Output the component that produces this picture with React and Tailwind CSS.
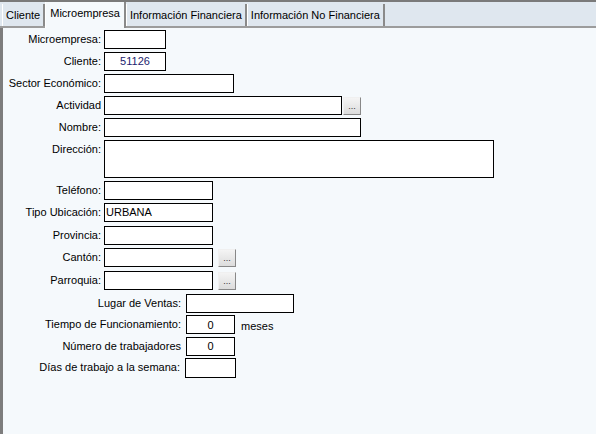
import React from 'react';

const font = { fontFamily: '"Liberation Sans", Arial, sans-serif' };

function Field({ w, h = 'h-[19px]', value = '', align = 'text-left', color = 'text-black' }) {
    return (
        <div className={`${w} ${h} border border-black bg-white flex items-center px-[1px] text-[11px] ${align} ${color}`}>
            <span className="w-full">{value}</span>
        </div>
    );
}

function Dots({ ml = '' }) {
    return (
        <div className={`${ml} w-[18px] h-[18px] bg-gradient-to-b from-[#f4f4f4] to-[#dcdcdc] border border-t-[#f0f0f0] border-l-[#f0f0f0] border-r-[#888] border-b-[#888] flex items-end justify-center pb-[3px] text-[9px] leading-none text-[#333]`}>
            ...
        </div>
    );
}

function Row({ label, labelW = 'w-[98px]', gap = 'gap-[3px]', mt, items = 'items-center', labelPad = '', children }) {
    return (
        <div className={`flex ${items} ${gap} ${mt}`}>
            <div className={`${labelW} ${labelPad} text-right text-[11px] text-black shrink-0 leading-none`}>{label}</div>
            {children}
        </div>
    );
}

export default function App() {
    const tabs = ['Cliente', 'Microempresa', 'Información Financiera', 'Información No Financiera'];

    return (
        <div style={font} className="w-[596px] h-[434px] bg-[#f5f9fc] flex flex-col overflow-hidden">
            <div className="h-[2px] bg-[#7a7a7a] shrink-0" />
            <div className="h-[26px] bg-[#dfe7ef] flex items-end shrink-0 relative">
                <div className="absolute left-0 right-0 bottom-0 h-[2px] bg-[#9c9c9c]" />
                <div className="flex items-end pl-[2px] relative">
                    {tabs.map((t, i) =>
                        i === 1 ? (
                            <div key={t} className="h-[26px] px-[4px] bg-[#f5f9fc] border-l border-l-white border-r-2 border-r-[#8a8a8a] text-[11px] flex items-center pb-[4px]">
                                {t}
                            </div>
                        ) : (
                            <div key={t} className="h-[22px] px-[3px] border-r-2 border-r-[#8a8a8a] border-l border-l-white text-[11px] flex items-center mb-[2px]">
                                {t}
                            </div>
                        )
                    )}
                </div>
            </div>
            <div className="flex-1 border-l-[3px] border-l-[#7d7d7d] flex flex-col pt-[2px]">
                <Row label="Microempresa:"><Field w="w-[62px]" /></Row>
                <Row label="Cliente:" mt="mt-[3px]">
                    <Field w="w-[62px]" value="51126" align="text-center" color="text-[#1c1c6e]" />
                </Row>
                <Row label="Sector Económico:" mt="mt-[3px]"><Field w="w-[130px]" /></Row>
                <Row label="Actividad" mt="mt-[3px]" gap="gap-0">
                    <div className="w-[3px]" />
                    <Field w="w-[238px]" />
                    <Dots ml="ml-[1px]" />
                </Row>
                <Row label="Nombre:" mt="mt-[3px]"><Field w="w-[257px]" /></Row>
                <Row label="Dirección:" mt="mt-[3px]" items="items-start" labelPad="pt-[4px]">
                    <div className="w-[390px] h-[38px] border border-black bg-white" />
                </Row>
                <Row label="Teléfono:" mt="mt-[3px]"><Field w="w-[109px]" /></Row>
                <Row label="Tipo Ubicación:" mt="mt-[3px]"><Field w="w-[109px]" value="URBANA" /></Row>
                <Row label="Provincia:" mt="mt-[4px]"><Field w="w-[109px]" /></Row>
                <Row label="Cantón:" mt="mt-[3px]">
                    <Field w="w-[109px]" />
                    <Dots ml="ml-[2px]" />
                </Row>
                <Row label="Parroquia:" mt="mt-[4px]">
                    <Field w="w-[109px]" />
                    <Dots ml="ml-[2px]" />
                </Row>
                <Row label="Lugar de Ventas:" labelW="w-[178px]" gap="gap-[5px]" mt="mt-[4px]">
                    <Field w="w-[108px]" />
                </Row>
                <Row label="Tiempo de Funcionamiento:" labelW="w-[178px]" gap="gap-[5px]" mt="mt-[2px]">
                    <Field w="w-[49px]" value="0" align="text-center" />
                    <span className="text-[11px] ml-[1px] mt-[3px]">meses</span>
                </Row>
                <Row label="Número de trabajadores" labelW="w-[178px]" gap="gap-[5px]" mt="mt-[2px]">
                    <Field w="w-[49px]" value="0" align="text-center" />
                </Row>
                <Row label="Días de trabajo a la semana:" labelW="w-[177px]" gap="gap-[5px]" mt="mt-[2px]">
                    <Field w="w-[51px]" h="h-[20px]" />
                </Row>
            </div>
        </div>
    );
}
